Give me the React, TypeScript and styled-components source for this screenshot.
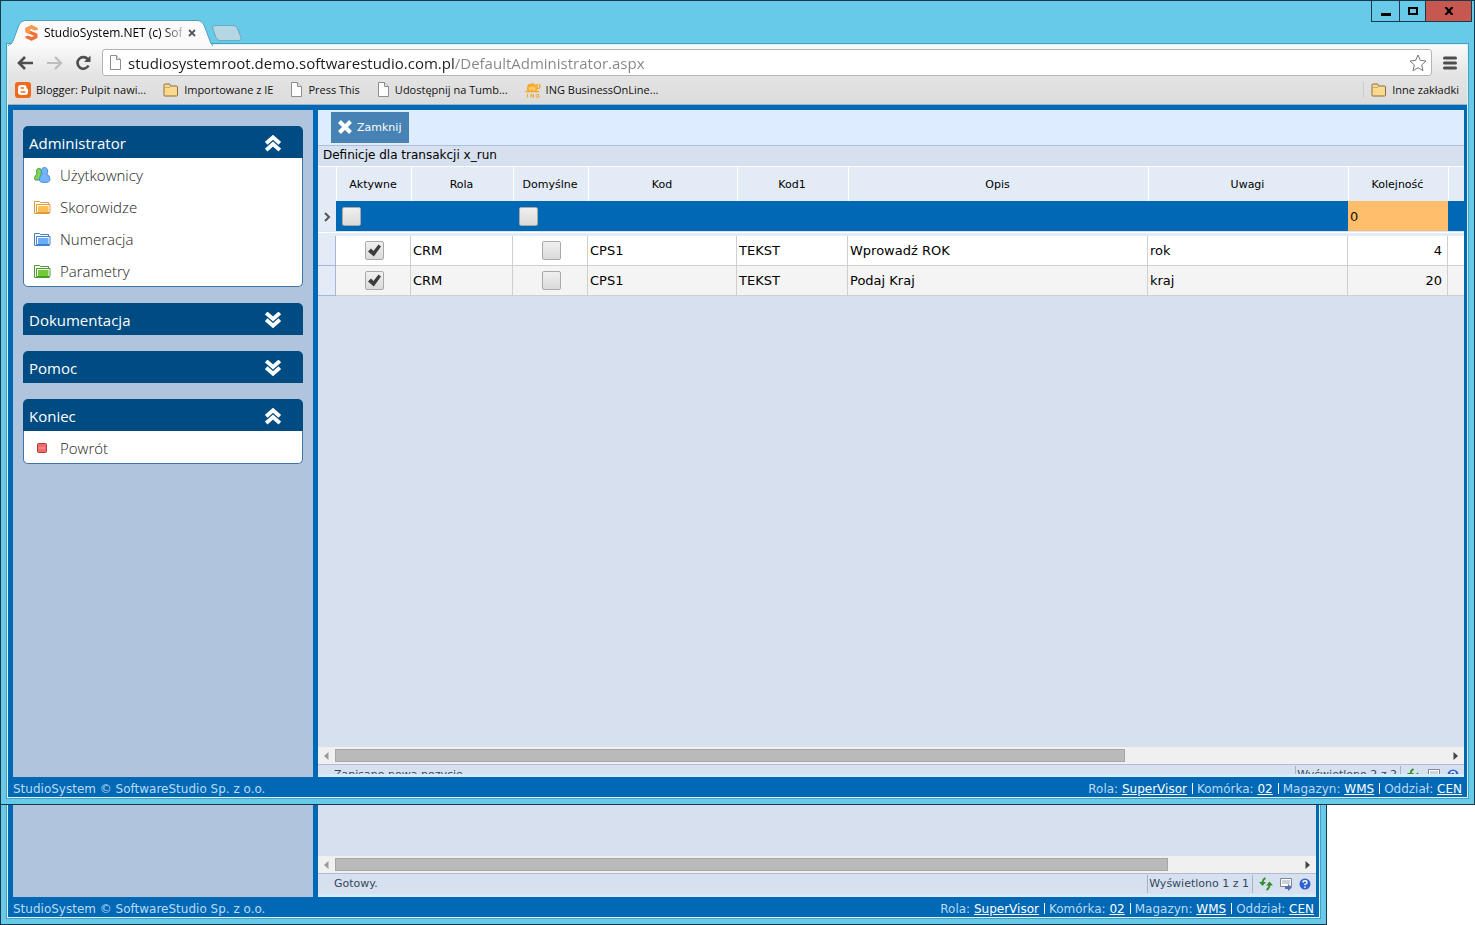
import React, { useState } from "react";
import styled, { createGlobalStyle } from "styled-components";

const verdana = `Verdana, "DejaVu Sans", sans-serif`;
const segoe = `"Segoe UI", "Open Sans", sans-serif`;

const GlobalStyle = createGlobalStyle`
  *, *::before, *::after { box-sizing: border-box; }
  body { margin: 0; background: #fff; color: #000; font: 11px/16px ${verdana}; }
  button { border: 0; padding: 0; background: none; font: inherit; color: inherit; cursor: pointer; }
  ul { list-style: none; margin: 0; padding: 0; }
  svg { display: block; flex: none; }
`;

/* ---------- desktop and window frames ---------- */

const Desktop = styled.div`
  position: relative;
  min-height: 100vh;
  overflow: hidden;
`;

const WindowFrame = styled.section<{ $back?: boolean }>`
  position: absolute;
  top: 0;
  left: 0;
  right: ${(p) => (p.$back ? "148px" : "0")};
  bottom: ${(p) => (p.$back ? "0" : "120px")};
  display: flex;
  flex-direction: column;
  padding: 0 7px 7px;
  border: 1px solid #17394b;
  background: #67cae9;
`;

const Client = styled.div`
  flex: 1;
  min-height: 0;
  display: flex;
  flex-direction: column;
  background: #0068b5;
  box-shadow: 0 0 0 1px #d9f3fb, 0 0 0 2px #4b9fbb;
`;

const TitleBar = styled.header`
  position: relative;
  z-index: 1;
  flex: 0 0 44px;
  display: flex;
  justify-content: space-between;
  align-items: flex-end;
`;

const TabStrip = styled.div`
  display: flex;
  align-items: flex-end;
`;

const Tab = styled.div`
  position: relative;
  width: 205px;
  height: 25px;
  padding: 0 12px 0 17px;
  display: flex;
  align-items: center;
  gap: 6px;
  font: 12px/16px ${segoe};
`;

const TabShape = styled.svg`
  position: absolute;
  left: 0;
  top: 0;
`;

const TabTitle = styled.span`
  position: relative;
  width: 138px;
  flex: none;
  white-space: nowrap;
  mask-image: linear-gradient(90deg, #000 118px, transparent 146px);
`;

const TabClose = styled.button`
  position: relative;
`;

const TabIcon = styled.span`
  position: relative;
`;

const NewTab = styled.button`
  height: 24px;
  margin-left: -3px;
`;

const Controls = styled.div`
  align-self: flex-start;
  display: flex;
  margin-right: -5px;
  border: 1px solid #17394b;
  border-top: 0;
`;

const ControlButton = styled.button<{ $w: number; $close?: boolean }>`
  width: ${(p) => p.$w}px;
  height: 20px;
  display: flex;
  align-items: center;
  justify-content: center;
  background: ${(p) => (p.$close ? "#c75850" : "transparent")};
  & + & { border-left: 1px solid #17394b; }
`;

/* ---------- browser chrome ---------- */

const Chrome = styled.div`
  flex: none;
  display: flex;
  flex-direction: column;
  height: 60px;
  background: linear-gradient(#fafafa, #e4e4e4 30px, #dcdcdc 58px);
  border-bottom: 1px solid #9ab3c6;
`;

const NavRow = styled.div`
  height: 32px;
  padding: 3px 10px 0 9px;
  display: flex;
  align-items: center;
`;

const NavButton = styled.button`
  width: 29px;
  flex: none;
`;

const Omnibox = styled.div`
  flex: 1;
  height: 27px;
  margin: 0 11px 0 -2px;
  padding: 0 4px 0 6px;
  display: flex;
  align-items: center;
  gap: 6px;
  background: #fff;
  border: 1px solid #b4b4b4;
  border-radius: 3px;
`;

const Address = styled.input`
  flex: 1;
  min-width: 0;
  padding: 0;
  border: 0;
  outline: 0;
  color: #1c1c1c;
  font: 15px/22px ${segoe};
  background: linear-gradient(90deg, #1c1c1c 327px, #858585 327px);
  background-clip: text;
  -webkit-background-clip: text;
  -webkit-text-fill-color: transparent;
`;

const Bookmarks = styled.nav`
  flex: 1;
  display: flex;
  align-items: center;
  gap: 17px;
  padding: 0 8px 2px 7px;
`;

const Bookmark = styled.a<{ $last?: boolean }>`
  display: flex;
  align-items: center;
  gap: 5px;
  color: #111;
  text-decoration: none;
  white-space: nowrap;
  font: 11px/16px ${segoe};
  ${(p) => p.$last && "margin-left: auto; padding-left: 7px; border-left: 1px solid #cbcbcb;"}
`;

/* ---------- application ---------- */

const AppBody = styled.div`
  flex: 1;
  min-height: 0;
  display: flex;
  gap: 5px;
  padding: 5px 3px 0 5px;
`;

const Sidebar = styled.aside`
  flex: 0 0 300px;
  display: flex;
  flex-direction: column;
  gap: 16px;
  padding: 16px 10px;
  background: #b0c4de;
`;

const Panel = styled.section`
  flex: none;
`;

const PanelHead = styled.button`
  width: 100%;
  height: 32px;
  padding: 2px 22px 0 6px;
  display: flex;
  align-items: center;
  justify-content: space-between;
  background: #004c82;
  color: #fff;
  font: 15px/22px ${segoe};
  border-radius: 5px 5px 0 0;
`;

const PanelList = styled.ul`
  background: #fff;
  border: 1px solid #3f74a8;
  border-top: 0;
  border-radius: 0 0 5px 5px;
`;

const PanelLink = styled.a`
  height: 32px;
  padding: 2px 0 0 10px;
  display: flex;
  align-items: center;
  gap: 9px;
  color: #222;
  text-decoration: none;
  font: 300 15px/20px ${segoe};
`;

const Content = styled.main`
  flex: 1;
  min-width: 0;
  display: flex;
  flex-direction: column;
  background: #d7e0ee;
`;

const Toolbar = styled.div`
  flex: none;
  padding: 2px 13px;
  height: 36px;
  background: #deecff;
  border-bottom: 1px solid #a9bfdc;
`;

const ToolButton = styled.button`
  height: 31px;
  padding: 0 8px 0 6px;
  display: flex;
  align-items: center;
  gap: 4px;
  background: #4682b4;
  color: #fff;
`;

const GridTitle = styled.h1`
  margin: 0;
  padding: 1px 5px 3px;
  font: 12px/16px ${verdana};
`;

const Grid = styled.table`
  width: 100%;
  table-layout: fixed;
  border-spacing: 0;
`;

const HeadCell = styled.th`
  height: 35px;
  padding: 1px 2px 0 0;
  font-weight: 400;
  background: #e3ebf6;
  border-top: 1px solid #fff;
  & + & { border-left: 1px solid #fff; }
`;

const EditCell = styled.td<{ $kind?: "marker" | "number" }>`
  height: 30px;
  padding: 0 6px;
  background: #0068b5;
  ${(p) => p.$kind === "marker" && "background: #e3ebf6; padding-top: 2px;"}
  ${(p) => p.$kind === "number" && "background: #ffbe6b; padding: 2px 2px 0;"}
`;

const Spacer = styled.td`
  height: 5px;
  padding: 0;
  background: linear-gradient(#d5e6f5 1px, #fff 1px 2px, #e3ebf6 2px);
`;

const Cell = styled.td<{ $align?: "center" | "right" }>`
  height: 30px;
  padding: 0 5px 0 2px;
  text-align: ${(p) => p.$align ?? "left"};
  font: 13px/16px ${verdana};
  border-right: 1px solid #cfcfcf;
  border-bottom: 1px solid #cfcfcf;
  &:last-child { border-right: 0; }
`;

const Row = styled.tr`
  background: #fff;
  &:nth-child(even) { background: #f4f4f4; }
`;

const MarkerCell = styled(Cell)`
  background: #e3ebf6;
  border-color: #a3b8d8;
`;

const NumberInput = styled.input`
  display: block;
  width: 100%;
  padding: 0;
  border: 0;
  outline: 0;
  background: transparent;
  color: #221100;
  font: 13px/16px ${verdana};
`;

const CheckLabel = styled.label`
  position: relative;
  display: block;
  width: 19px;
  height: 19px;
`;

const CenteredCheck = styled.div`
  display: flex;
  justify-content: center;
  padding-left: 6px;
`;

const CheckInput = styled.input`
  appearance: none;
  display: block;
  width: 19px;
  height: 19px;
  margin: 0;
  border: 1px solid #a9a9a9;
  border-radius: 2px;
  background: linear-gradient(#f0f0f0, #dadada);
`;

const CheckMark = styled.svg`
  position: absolute;
  left: 0;
  top: 0;
  pointer-events: none;
`;

const Empty = styled.div`
  flex: 1;
`;

const ScrollBar = styled.div`
  flex: none;
  height: 17px;
  padding: 2px 0;
  display: flex;
  background: #f0f0f0;
`;

const ScrollArrow = styled.button`
  width: 17px;
  display: flex;
  align-items: center;
  justify-content: center;
`;

const Track = styled.div`
  flex: 1;
`;

const Thumb = styled.div<{ $size: number }>`
  width: ${(p) => p.$size}%;
  height: 13px;
  background: #bababa;
  border: 1px solid #a6a6a6;
`;

const StatusBar = styled.div<{ $cut?: boolean }>`
  flex: none;
  height: ${(p) => (p.$cut ? 13 : 24)}px;
  border-top: 1px solid #afbdd4;
  border-bottom: 3px solid #d6ecfb;
  overflow: hidden;
`;

const StatusLine = styled.div`
  height: 20px;
  padding: 0 5px 0 16px;
  display: flex;
  align-items: center;
  justify-content: space-between;
  color: #34475f;
`;

const StatusTools = styled.div`
  display: flex;
  align-items: center;
  gap: 6px;
`;

const Count = styled.span`
  padding: 0 3px 0 1px;
  line-height: 18px;
  border: 1px solid #a3b4cc;
  border-width: 0 1px;
`;

const AppFooter = styled.footer`
  flex: none;
  height: 20px;
  padding: 2px 5px 0;
  display: flex;
  align-items: flex-start;
  justify-content: space-between;
  color: #b9dbf7;
  font-size: 12px;
  line-height: 20px;
`;

const Facts = styled.div`
  display: flex;
`;

const Fact = styled.span`
  & + & {
    margin-left: 5px;
    padding-left: 5px;
    background: linear-gradient(#fff, #fff) 0 4px / 1px 11px no-repeat;
  }
  a { color: #fff; }
`;

/* ---------- icons ---------- */

const PageIcon = () => (
  <svg width="13" height="15" viewBox="0 0 13 15">
    <path d="M1.5.5h6l4 4v10h-10z" fill="#fdfdfd" stroke="#8d8d8d" />
    <path d="M7.5.5v4h4" fill="#e6e6e6" stroke="#8d8d8d" />
  </svg>
);

const FolderIcon = () => (
  <svg width="16" height="14" viewBox="0 0 16 14">
    <path d="M1 3.500V2Q1 1 2 1h4.500l1.500 2h5.500Q14.500 3 14.500 4v8q0 1-1 1H1.800Q1 13 1 12z" fill="#f8dc9c" stroke="#8f6c35" />
    <path d="M1.500 5Q2 4.300 3 4.300h4L8.300 3" fill="none" stroke="#c9a35f" />
    <path d="M2 6h11.500v5.500H2z" fill="#fbd88a" />
  </svg>
);

const BloggerIcon = () => (
  <svg width="16" height="16" viewBox="0 0 16 16">
    <rect width="16" height="16" rx="3" fill="#ee6a1d" />
    <path d="M6 3h3a2.500 2.500 0 0 1 2.500 2.500q0 1.500 1.500 1.500v3a3 3 0 0 1-3 3H6a3 3 0 0 1-3-3V6a3 3 0 0 1 3-3z" fill="#fff" />
    <path d="M6.300 6h2.200M6.300 10h3.500" stroke="#ee6a1d" strokeWidth="1.500" strokeLinecap="round" />
  </svg>
);

const LionIcon = () => (
  <svg width="16" height="16" viewBox="0 0 16 16" fill="none" stroke="#f5a623" strokeWidth="1.300">
    <path d="M3 3l2-1.500L7 3l1.500-1.500L11 3l1 3v3.500H3.500L2.500 6z" fill="#f9b640" stroke="none" />
    <path d="M.5 9.500h3l-1-3 1-3.500 2 1L7.500 1.500 9.500 4 12 2.500l.5 4 1-.5M3.500 9.500h10.500M14 2q2 2 0 5" />
    <path d="M5 5.500v3M7 5v2M9 5.500v3" stroke="#fbe3b4" strokeWidth="1" />
    <path d="M2.500 12v3.500M6 15.500V12l2.500 3.500V12M14 12.600q-3-1-3 1.200t3 1.400v-1.400h-1" strokeWidth="1" />
  </svg>
);

const LogoIcon = () => (
  <svg width="13" height="16" viewBox="0 0 13 16">
    <path d="M10.800 5V4L6.500 2 2.200 4v2.200l8.600 3.600V12l-4.300 2-4.300-2v-1" fill="none" stroke="#f0703a" strokeWidth="3.400" strokeLinejoin="round" />
    <path d="M10.800 5V4L6.500 2 2.200 4v2.200L5 7.400" fill="none" stroke="#f79a4a" strokeWidth="3.400" strokeLinejoin="round" />
  </svg>
);

const MenuFolder = ({ line, fill }: { line: string; fill: string }) => (
  <svg width="17" height="16" viewBox="0 0 17 16">
    <path d="M.5 14.500v-12h5l1 1h8v2" fill="#fff" stroke={line} />
    <path d="M2.500 13.500V5.500h13.500v8z" fill="#fff" stroke={line} />
    <path d="M.5 14.500h15" stroke={line} />
    <rect x="4" y="7" width="10.500" height="6" fill={fill} />
  </svg>
);

const UsersIcon = () => (
  <svg width="17" height="18" viewBox="0 0 17 18">
    <path d="M5 2.500a2.500 2.500 0 0 1 2.500 2.700L7 8l1 6H1.500Q.5 14 .6 12q.2-3 2.400-4L2.500 5A2.500 2.500 0 0 1 5 2.500z" fill="#7fd65c" stroke="#4a9c3c" />
    <path d="M10.500 1.500A3.200 3.200 0 0 1 13.700 5q0 2-1 3.300 3.300 1 3.300 5.200 0 3-5.500 3T5.500 13.500q0-4.200 2.800-5.200Q7.300 7 7.300 5a3.200 3.200 0 0 1 3.200-3.500z" fill="#75b4fb" stroke="#4c8cd6" />
  </svg>
);

const StopIcon = () => (
  <svg width="17" height="16" viewBox="0 0 17 16">
    <rect x="3.500" y="3.500" width="9" height="9" rx="1" fill="#f06a6a" stroke="#b33a3a" />
    <path d="M5 8h6" stroke="#f9a9a9" />
  </svg>
);

const DoubleChevron = ({ up }: { up: boolean }) => (
  <svg width="16" height="17" viewBox="0 0 16 17" fill="none" stroke="#fff" strokeWidth="3.800">
    {up ? <path d="M1.200 8.300 8 2.300l6.800 6M1.200 15 8 9l6.800 6" /> : <path d="M1.200 1 8 7l6.800-6M1.200 7.700 8 13.700l6.800-6" />}
  </svg>
);

const CrossIcon = () => (
  <svg width="16" height="16" viewBox="0 0 16 16" stroke="#fff" strokeWidth="4">
    <path d="M2.500 1.500l11 11M13.500 1.500l-11 11" />
  </svg>
);

const RefreshIcon = () => (
  <svg width="14" height="14" viewBox="0 0 14 14">
    <path d="M3.500 6Q3.500 2.500 6.500 1M10.500 7.500q0 4-3 5.500" fill="none" stroke="#2f8f2b" strokeWidth="1.800" />
    <path d="M0 5h7L3.500 9zM7 8.500h7L10.500 4.500z" fill="#2f8f2b" />
  </svg>
);

const ExportIcon = () => (
  <svg width="14" height="14" viewBox="0 0 14 14">
    <path d="M1.500 1.500h11v8h-11z" fill="#fff" stroke="#7b8794" />
    <path d="M3 4h8M3 6h8" stroke="#9aa5b1" />
    <path d="M6 9h3V7l4 3.500L9 14v-2H6z" fill="#5570b4" />
  </svg>
);

const HelpIcon = () => (
  <svg width="12" height="12" viewBox="0 0 12 12">
    <circle cx="6" cy="6" r="5.500" fill="#2d62cf" />
    <path d="M4 4.500Q4 2.800 6 2.800t2 1.600Q8 5.500 6 6.300v1M6 8.500V10" fill="none" stroke="#fff" strokeWidth="1.400" />
  </svg>
);

/* ---------- shared pieces ---------- */

const Check = ({ label, initial }: { label: string; initial?: boolean }) => {
  const [on, setOn] = useState(!!initial);
  return (
    <CheckLabel>
      <CheckInput type="checkbox" aria-label={label} checked={on} onChange={(e) => setOn(e.target.checked)} />
      {on && (
        <CheckMark width="19" height="19" viewBox="0 0 19 19">
          <path d="M3 10.500l3-3 2.500 2.500 5-6.500L16 5.500 8.800 15.500z" fill="#3c3c3c" />
        </CheckMark>
      )}
    </CheckLabel>
  );
};

const HorizontalScroll = ({ size }: { size: number }) => (
  <ScrollBar>
    <ScrollArrow aria-label="Przewiń w lewo">
      <svg width="5" height="8" viewBox="0 0 5 8"><path d="M4.500 0v8L0 4z" fill="#999" /></svg>
    </ScrollArrow>
    <Track><Thumb $size={size} /></Track>
    <ScrollArrow aria-label="Przewiń w prawo">
      <svg width="5" height="8" viewBox="0 0 5 8"><path d="M.5 0v8L5 4z" fill="#444" /></svg>
    </ScrollArrow>
  </ScrollBar>
);

const Status = ({ text, count, cut }: { text: string; count: string; cut?: boolean }) => (
  <StatusBar $cut={cut}>
    <StatusLine>
      <span>{text}</span>
      <StatusTools>
        <Count>{count}</Count>
        <button aria-label="Odśwież"><RefreshIcon /></button>
        <button aria-label="Eksport"><ExportIcon /></button>
        <button aria-label="Pomoc"><HelpIcon /></button>
      </StatusTools>
    </StatusLine>
  </StatusBar>
);

const facts = [["Rola", "SuperVisor"], ["Komórka", "02"], ["Magazyn", "WMS"], ["Oddział", "CEN"]];

const Footer = () => (
  <AppFooter>
    <span>StudioSystem © SoftwareStudio Sp. z o.o.</span>
    <Facts>
      {facts.map(([name, value]) => (
        <Fact key={name}>{name}: <a href="#">{value}</a></Fact>
      ))}
    </Facts>
  </AppFooter>
);

interface MenuItem { text: string; icon: React.ReactNode }

const MenuPanel = ({ title, items, initial }: { title: string; items: MenuItem[]; initial?: boolean }) => {
  const [open, setOpen] = useState(!!initial);
  return (
    <Panel>
      <PanelHead aria-expanded={open} onClick={() => setOpen(!open)}>
        {title}
        <DoubleChevron up={open} />
      </PanelHead>
      {open && items.length > 0 && (
        <PanelList>
          {items.map((item) => (
            <li key={item.text}><PanelLink href="#">{item.icon}{item.text}</PanelLink></li>
          ))}
        </PanelList>
      )}
    </Panel>
  );
};

const adminItems: MenuItem[] = [
  { text: "Użytkownicy", icon: <UsersIcon /> },
  { text: "Skorowidze", icon: <MenuFolder line="#e09a35" fill="#f9bf5a" /> },
  { text: "Numeracja", icon: <MenuFolder line="#3f7fcb" fill="#6aaef7" /> },
  { text: "Parametry", icon: <MenuFolder line="#4a9c2c" fill="#74c93a" /> },
];

const columns = ["Aktywne", "Rola", "Domyślne", "Kod", "Kod1", "Opis", "Uwagi", "Kolejność"];
const widths = [18, 75, 102, 75, 149, 111, 300, 200, 100];

const rows = [
  { rola: "CRM", kod: "CPS1", kod1: "TEKST", opis: "Wprowadź ROK", uwagi: "rok", kolejnosc: 4 },
  { rola: "CRM", kod: "CPS1", kod1: "TEKST", opis: "Podaj Kraj", uwagi: "kraj", kolejnosc: 20 },
];

const Definitions = () => (
  <Grid>
    <colgroup>
      {widths.map((w, i) => <col key={i} width={w} />)}
      <col />
    </colgroup>
    <thead>
      <tr>
        <HeadCell />
        {columns.map((c) => <HeadCell key={c} scope="col">{c}</HeadCell>)}
        <HeadCell />
      </tr>
      <tr>
        <EditCell $kind="marker">
          <svg width="7" height="10" viewBox="0 0 7 10"><path d="M1 1l4 4-4 4" fill="none" stroke="#555" strokeWidth="2" /></svg>
        </EditCell>
        <EditCell><Check label="Aktywne, nowy wiersz" /></EditCell>
        <EditCell />
        <EditCell><Check label="Domyślne, nowy wiersz" /></EditCell>
        <EditCell /><EditCell /><EditCell /><EditCell />
        <EditCell $kind="number"><NumberInput aria-label="Kolejność" defaultValue="0" /></EditCell>
        <EditCell />
      </tr>
      <tr><Spacer colSpan={10} /></tr>
    </thead>
    <tbody>
      {rows.map((r) => (
        <Row key={r.opis}>
          <MarkerCell />
          <Cell><CenteredCheck><Check label={`Aktywne, ${r.opis}`} initial /></CenteredCheck></Cell>
          <Cell>{r.rola}</Cell>
          <Cell><CenteredCheck><Check label={`Domyślne, ${r.opis}`} /></CenteredCheck></Cell>
          <Cell>{r.kod}</Cell>
          <Cell>{r.kod1}</Cell>
          <Cell>{r.opis}</Cell>
          <Cell>{r.uwagi}</Cell>
          <Cell $align="right">{r.kolejnosc}</Cell>
          <Cell />
        </Row>
      ))}
    </tbody>
  </Grid>
);

/* ---------- windows ---------- */

const BackWindow = () => (
  <WindowFrame $back>
    <Client>
      <AppBody>
        <Sidebar />
        <Content>
          <Empty />
          <HorizontalScroll size={86.4} />
          <Status text="Gotowy." count="Wyświetlono 1 z 1" />
        </Content>
      </AppBody>
      <Footer />
    </Client>
  </WindowFrame>
);

const FrontWindow = () => (
  <WindowFrame>
    <TitleBar>
      <TabStrip>
        <Tab>
          <TabShape width="205" height="26" viewBox="0 0 205 26">
            <path d="M0 26Q3 25 5 21L11 5Q13 .5 17 .5H190Q194 .5 196 5l6 16q1 3 3 5z" fill="#fafafa" stroke="#4e9fba" />
            <path d="M1 25.500h203" stroke="#fafafa" />
          </TabShape>
          <TabIcon><LogoIcon /></TabIcon>
          <TabTitle>StudioSystem.NET (c) Soft</TabTitle>
          <TabClose aria-label="Zamknij kartę">
            <svg width="8" height="8" viewBox="0 0 8 8" stroke="#555" strokeWidth="1.800"><path d="M1 1l6 6M7 1L1 7" /></svg>
          </TabClose>
        </Tab>
        <NewTab aria-label="Nowa karta">
          <svg width="33" height="16" viewBox="0 0 33 16">
            <path d="M5 .5h18q3 0 4 2l4 10q.8 3-2 3H10q-3 0-4-3L2.500 3Q2 .5 5 .5z" fill="#b5d7e4" stroke="#69a9c2" />
          </svg>
        </NewTab>
      </TabStrip>
      <Controls>
        <ControlButton $w={27} aria-label="Minimalizuj">
          <svg width="10" height="10" viewBox="0 0 10 10"><path d="M0 7h10v3H0z" /></svg>
        </ControlButton>
        <ControlButton $w={26} aria-label="Maksymalizuj">
          <svg width="10" height="8" viewBox="0 0 10 8"><path d="M1 1h8v6H1z" fill="none" stroke="#000" strokeWidth="2" /></svg>
        </ControlButton>
        <ControlButton $w={46} $close aria-label="Zamknij">
          <svg width="10" height="8" viewBox="0 0 10 8"><path d="M1.500 0l7 8M8.500 0l-7 8" stroke="#000" strokeWidth="2.200" /></svg>
        </ControlButton>
      </Controls>
    </TitleBar>
    <Client>
      <Chrome>
        <NavRow>
          <NavButton aria-label="Wstecz">
            <svg width="17" height="14" viewBox="0 0 17 14" fill="none" stroke="#4d4d4d" strokeWidth="2.600"><path d="M2 7h14M8 1L2 7l6 6" /></svg>
          </NavButton>
          <NavButton aria-label="Dalej">
            <svg width="17" height="14" viewBox="0 0 17 14" fill="none" stroke="#bdbdbd" strokeWidth="2.200"><path d="M1 7h14M9 1l6 6-6 6" /></svg>
          </NavButton>
          <NavButton aria-label="Odśwież stronę">
            <svg width="17" height="16" viewBox="0 0 17 16"><path d="M13 4.500A5.800 5.800 0 1 0 13.500 10.500" fill="none" stroke="#4d4d4d" strokeWidth="2.600" /><path d="M15.500.5V7H9z" fill="#4d4d4d" /></svg>
          </NavButton>
          <Omnibox>
            <PageIcon />
            <Address aria-label="Adres" defaultValue="studiosystemroot.demo.softwarestudio.com.pl/DefaultAdministrator.aspx" />
            <button aria-label="Dodaj zakładkę">
              <svg width="18" height="18" viewBox="0 0 18 18"><path d="M9 1l2.300 5.400 5.700.6-4.300 3.900 1.300 5.800L9 13.700l-5 3 1.300-5.800L1 7l5.700-.6z" fill="#fff" stroke="#777" strokeLinejoin="round" /></svg>
            </button>
          </Omnibox>
          <button aria-label="Menu">
            <svg width="14" height="14" viewBox="0 0 14 14"><path d="M1.500 2h11M1.500 7h11M1.500 12h11" stroke="#4d4d4d" strokeWidth="3" strokeLinecap="round" /></svg>
          </button>
        </NavRow>
        <Bookmarks>
          <Bookmark href="#"><BloggerIcon />Blogger: Pulpit nawi...</Bookmark>
          <Bookmark href="#"><FolderIcon />Importowane z IE</Bookmark>
          <Bookmark href="#"><PageIcon />Press This</Bookmark>
          <Bookmark href="#"><PageIcon />Udostępnij na Tumb...</Bookmark>
          <Bookmark href="#"><LionIcon />ING BusinessOnLine...</Bookmark>
          <Bookmark href="#" $last><FolderIcon />Inne zakładki</Bookmark>
        </Bookmarks>
      </Chrome>
      <AppBody>
        <Sidebar>
          <MenuPanel title="Administrator" items={adminItems} initial />
          <MenuPanel title="Dokumentacja" items={[]} />
          <MenuPanel title="Pomoc" items={[]} />
          <MenuPanel title="Koniec" items={[{ text: "Powrót", icon: <StopIcon /> }]} initial />
        </Sidebar>
        <Content>
          <Toolbar>
            <ToolButton><CrossIcon />Zamknij</ToolButton>
          </Toolbar>
          <GridTitle>Definicje dla transakcji x_run</GridTitle>
          <Definitions />
          <Empty />
          <HorizontalScroll size={71} />
          <Status text="Zapisano nową pozycję." count="Wyświetlono 2 z 2" cut />
        </Content>
      </AppBody>
      <Footer />
    </Client>
  </WindowFrame>
);

export default function App() {
  return (
    <>
      <GlobalStyle />
      <Desktop>
        <BackWindow />
        <FrontWindow />
      </Desktop>
    </>
  );
}
